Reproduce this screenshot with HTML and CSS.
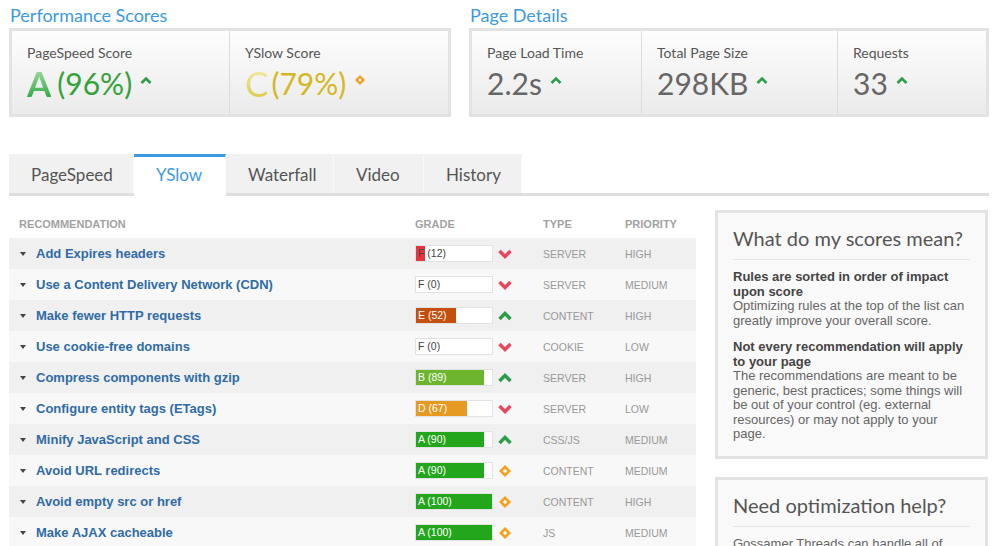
FILE: index.html
```html
<!DOCTYPE html>
<html lang="en">
<head>
    <meta charset="UTF-8">
    <title>Report</title>
    <link rel="stylesheet" href="styles.css">
</head>
<body>
    <div class="summary">
        <div class="panel panel-scores">
            <h2>Performance Scores</h2>
            <div class="score-box">
                <div class="score score-wide">
                    <div class="score-label">PageSpeed Score</div>
                    <div class="score-value good"><span class="letter letter-a">A</span>(96%)
                        <svg class="mini" width="12" height="8" viewBox="0 0 12 8"><path d="M1.5 7 L6 2.5 L10.5 7" stroke="#2b9d47" stroke-width="2.6" fill="none"/></svg>
                    </div>
                </div>
                <div class="score score-last">
                    <div class="score-label">YSlow Score</div>
                    <div class="score-value fair"><span class="letter letter-c">C</span>(79%)
                        <svg class="mini" width="12" height="12" viewBox="0 0 12 12"><path d="M6 1 L11 6 L6 11 L1 6Z" fill="#f5a01f"/><path d="M6 4.3 L7.7 6 L6 7.7 L4.3 6Z" fill="#fff"/></svg>
                    </div>
                </div>
            </div>
        </div>
        <div class="panel panel-details">
            <h2>Page Details</h2>
            <div class="score-box">
                <div class="score score-load">
                    <div class="score-label">Page Load Time</div>
                    <div class="score-value">2.2s
                        <svg class="mini" width="12" height="8" viewBox="0 0 12 8"><path d="M1.5 7 L6 2.5 L10.5 7" stroke="#2b9d47" stroke-width="2.6" fill="none"/></svg>
                    </div>
                </div>
                <div class="score score-size">
                    <div class="score-label">Total Page Size</div>
                    <div class="score-value">298KB
                        <svg class="mini" width="12" height="8" viewBox="0 0 12 8"><path d="M1.5 7 L6 2.5 L10.5 7" stroke="#2b9d47" stroke-width="2.6" fill="none"/></svg>
                    </div>
                </div>
                <div class="score score-last">
                    <div class="score-label">Requests</div>
                    <div class="score-value">33
                        <svg class="mini" width="12" height="8" viewBox="0 0 12 8"><path d="M1.5 7 L6 2.5 L10.5 7" stroke="#2b9d47" stroke-width="2.6" fill="none"/></svg>
                    </div>
                </div>
            </div>
        </div>
    </div>

    <div class="tabs">
        <div class="tab tab-pagespeed">PageSpeed</div>
        <div class="tab tab-yslow active">YSlow</div>
        <div class="tab tab-waterfall">Waterfall</div>
        <div class="tab tab-video">Video</div>
        <div class="tab tab-history">History</div>
    </div>

    <div class="content">
        <div class="rules">
            <div class="rules-head">
                <div>Recommendation</div>
                <div>Grade</div>
                <div>Type</div>
                <div>Priority</div>
            </div>
            <div id="rows"></div>
        </div>

        <div class="side">
            <div class="side-box">
                <h3>What do my scores mean?</h3>
                <p><b>Rules are sorted in order of impact upon score</b>
                Optimizing rules at the top of the list can greatly improve your overall score.</p>
                <p><b>Not every recommendation will apply to your page</b>
                The recommendations are meant to be generic, best practices; some things will be out of your control (eg. external resources) or may not apply to your page.</p>
            </div>
            <div class="side-box">
                <h3>Need optimization help?</h3>
                <p>Gossamer Threads can handle all of your optimization needs.</p>
            </div>
        </div>
    </div>

    <script>
        const rules = [
            ['Add Expires headers', 'F', 12, 'down', 'SERVER', 'HIGH'],
            ['Use a Content Delivery Network (CDN)', 'F', 0, 'down', 'SERVER', 'MEDIUM'],
            ['Make fewer HTTP requests', 'E', 52, 'up', 'CONTENT', 'HIGH'],
            ['Use cookie-free domains', 'F', 0, 'down', 'COOKIE', 'LOW'],
            ['Compress components with gzip', 'B', 89, 'up', 'SERVER', 'HIGH'],
            ['Configure entity tags (ETags)', 'D', 67, 'down', 'SERVER', 'LOW'],
            ['Minify JavaScript and CSS', 'A', 90, 'up', 'CSS/JS', 'MEDIUM'],
            ['Avoid URL redirects', 'A', 90, 'same', 'CONTENT', 'MEDIUM'],
            ['Avoid empty src or href', 'A', 100, 'same', 'CONTENT', 'HIGH'],
            ['Make AJAX cacheable', 'A', 100, 'same', 'JS', 'MEDIUM']
        ];

        const icons = {
            down: '<svg width="14" height="10" viewBox="0 0 14 10"><path d="M1.5 2 L7 7.5 L12.5 2" stroke="#e8465b" stroke-width="3.4" fill="none"/></svg>',
            up: '<svg width="14" height="10" viewBox="0 0 14 10"><path d="M1.5 8 L7 2.5 L12.5 8" stroke="#2b9d47" stroke-width="3.4" fill="none"/></svg>',
            same: '<svg width="14" height="14" viewBox="0 0 14 14"><path d="M7 1 L13 7 L7 13 L1 7Z" fill="#f5a01f"/><path d="M7 4.8 L9.2 7 L7 9.2 L4.8 7Z" fill="#fff"/></svg>'
        };

        const rows = document.getElementById('rows');
        rules.forEach(r => {
            const row = document.createElement('div');
            row.className = 'rule';
            row.innerHTML =
                '<div class="rule-name"><span class="caret"></span>' + r[0] + '</div>' +
                '<div class="rule-grade"><div class="bar grade-' + r[1].toLowerCase() + '">' +
                    '<div class="fill" style="width:' + r[2] + '%"></div>' +
                    '<span class="bar-label">' + r[1] + ' (' + r[2] + ')</span></div>' +
                    '<span class="trend">' + icons[r[3]] + '</span></div>' +
                '<div class="rule-type">' + r[4] + '</div>' +
                '<div class="rule-type">' + r[5] + '</div>';
            rows.appendChild(row);
        });
    </script>
</body>
</html>
```

FILE: styles.css
```css
html {
    overflow: hidden;
}
body {
    margin: 0;
    padding: 4px 11px 0 9px;
    font-family: "Liberation Sans", Arial, sans-serif;
    background-color: #fff;
    color: #555;
}
.summary {
    display: flex;
    gap: 18px;
}
.panel-scores {
    width: 442px;
}
.panel-details {
    width: 520px;
}
h2 {
    margin: 0 0 1px 1px;
    font: 18px/23px Lato, sans-serif;
    color: #3b9ae1;
}
.score-box {
    display: flex;
    height: 83px;
    border: 3px solid #e3e3e3;
    background: linear-gradient(#fdfdfd, #ebebeb);
}
.score {
    padding: 13px 15px 0;
    border-right: 1px solid #dcdcdc;
}
.score-wide {
    width: 187px;
}
.score-load {
    width: 139px;
}
.score-size {
    width: 165px;
}
.score-last {
    flex: 1;
    border-right: none;
}
.score-label {
    font: 14px/18px Lato, sans-serif;
    color: #555;
}
.score-value {
    display: flex;
    align-items: center;
    margin-top: 2px;
    font: 30px/38px Lato, sans-serif;
    color: #666;
}
.score-value.good {
    color: #34a23a;
}
.score-value.fair {
    color: #d4b822;
}
.letter {
    font-size: 35px;
    font-weight: 700;
    margin-right: 6px;
    -webkit-background-clip: text;
    background-clip: text;
    color: transparent;
}
.letter-a {
    background-image: linear-gradient(#b2e2b2, #22a437);
}
.letter-c {
    font-weight: 400;
    margin-right: 3px;
    background-image: linear-gradient(#f6f1b0, #d9c63a);
}
.mini {
    margin-left: 8px;
    margin-top: -6px;
}
.tabs {
    display: flex;
    margin-top: 37px;
    border-bottom: 3px solid #dedede;
}
.tab {
    height: 36px;
    padding: 0 22px;
    font: 17px/36px Lato, sans-serif;
    color: #555;
    background-color: #f1f1f1;
    border-top: 3px solid #f1f1f1;
    border-right: 1px solid #fafafa;
}
.tab-pagespeed {
    width: 80px;
}
.tab-yslow {
    width: 47px;
}
.tab-waterfall {
    width: 63px;
}
.tab-video {
    width: 45px;
}
.tab-history {
    width: 53px;
}
.tab.active {
    background-color: #fff;
    border-top-color: #3b9ae1;
    color: #3b9ae1;
    margin-bottom: -3px;
    height: 39px;
}
.content {
    display: flex;
    margin-top: 14px;
}
.rules {
    width: 687px;
}
.rules-head, .rule {
    display: grid;
    grid-template-columns: 396px 128px 82px 1fr;
    align-items: center;
}
.rules-head {
    height: 28px;
    font-size: 11px;
    font-weight: bold;
    text-transform: uppercase;
    color: #a2a2a2;
}
.rules-head div, .rule div.rule-type {
    padding-left: 10px;
}
.rule {
    height: 31px;
    background-color: #f8f8f8;
}
.rule:nth-child(odd) {
    background-color: #f0f0f0;
}
.rule-name {
    display: flex;
    align-items: center;
    padding-left: 11px;
    font-size: 13px;
    font-weight: bold;
    color: #2f6ba6;
}
.caret {
    width: 0;
    height: 0;
    margin-right: 10px;
    border-left: 3.5px solid transparent;
    border-right: 3.5px solid transparent;
    border-top: 4px solid #444;
}
.rule-grade {
    display: flex;
    align-items: center;
    padding-left: 10px;
}
.bar {
    position: relative;
    width: 76px;
    height: 15px;
    border: 1px solid #e2e2e2;
    background-color: #fff;
}
.fill {
    height: 100%;
}
.bar-label {
    position: absolute;
    left: 2px;
    top: 0;
    font-size: 10.5px;
    line-height: 15px;
    color: #fff;
}
.grade-f .fill {
    background-color: #e8343f;
}
.grade-f .bar-label {
    color: #444;
}
.grade-e .fill {
    background-color: #c4500f;
}
.grade-d .fill {
    background-color: #e69a22;
}
.grade-b .fill {
    background-color: #6db52f;
}
.grade-a .fill {
    background-color: #23a51c;
}
.trend {
    display: flex;
    margin-left: 5px;
}
.rule-type {
    font-size: 10.5px;
    color: #999;
}
.side {
    width: 273px;
    margin-left: 19px;
}
.side-box {
    border: 3px solid #e3e3e3;
    background-color: #f9f9f9;
    padding: 12px 15px 14px;
    margin-bottom: 18px;
}
h3 {
    margin: 0 0 10px;
    padding-bottom: 8px;
    border-bottom: 1px solid #e6e6e6;
    font: 20px/26px Lato, sans-serif;
    color: #555;
}
.side-box p {
    margin: 0 0 12px;
    font-size: 13px;
    line-height: 14.5px;
    color: #666;
}
.side-box p:last-child {
    margin-bottom: 0;
}
.side-box b {
    display: block;
    color: #444;
}
```
